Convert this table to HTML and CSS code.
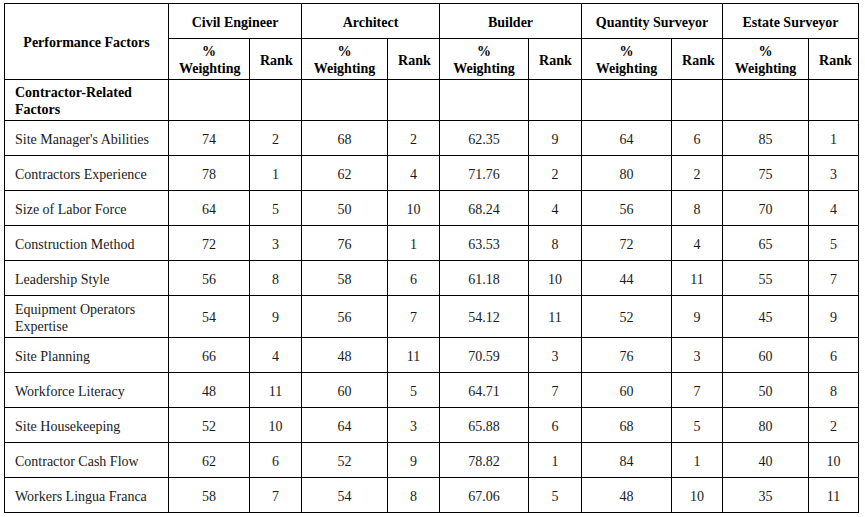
FILE: index.html
```html
<!DOCTYPE html>
<html>
<head>
<meta charset="utf-8">
<link rel="stylesheet" href="styles.css">
</head>
<body>
<table class="data">
  <colgroup>
    <col class="c-factor">
    <col class="c-w1"><col class="c-r1">
    <col class="c-w2"><col class="c-r2">
    <col class="c-w3"><col class="c-r3">
    <col class="c-w4"><col class="c-r4">
    <col class="c-w5"><col class="c-r5">
  </colgroup>
  <thead>
    <tr class="h1">
      <th rowspan="2">Performance Factors</th>
      <th colspan="2">Civil Engineer</th>
      <th colspan="2">Architect</th>
      <th colspan="2">Builder</th>
      <th colspan="2">Quantity Surveyor</th>
      <th colspan="2">Estate Surveyor</th>
    </tr>
    <tr class="h2">
      <th>%<br>Weighting</th><th>Rank</th>
      <th>%<br>Weighting</th><th>Rank</th>
      <th>%<br>Weighting</th><th>Rank</th>
      <th>%<br>Weighting</th><th>Rank</th>
      <th>%<br>Weighting</th><th>Rank</th>
    </tr>
  </thead>
  <tbody>
    <tr class="section">
      <th class="left">Contractor-Related<br>Factors</th>
      <td></td><td></td><td></td><td></td><td></td><td></td><td></td><td></td><td></td><td></td>
    </tr>
    <tr><td class="left">Site Manager's Abilities</td><td>74</td><td>2</td><td>68</td><td>2</td><td>62.35</td><td>9</td><td>64</td><td>6</td><td>85</td><td>1</td></tr>
    <tr><td class="left">Contractors Experience</td><td>78</td><td>1</td><td>62</td><td>4</td><td>71.76</td><td>2</td><td>80</td><td>2</td><td>75</td><td>3</td></tr>
    <tr><td class="left">Size of Labor Force</td><td>64</td><td>5</td><td>50</td><td>10</td><td>68.24</td><td>4</td><td>56</td><td>8</td><td>70</td><td>4</td></tr>
    <tr><td class="left">Construction Method</td><td>72</td><td>3</td><td>76</td><td>1</td><td>63.53</td><td>8</td><td>72</td><td>4</td><td>65</td><td>5</td></tr>
    <tr><td class="left">Leadership Style</td><td>56</td><td>8</td><td>58</td><td>6</td><td>61.18</td><td>10</td><td>44</td><td>11</td><td>55</td><td>7</td></tr>
    <tr class="tall"><td class="left">Equipment Operators<br>Expertise</td><td>54</td><td>9</td><td>56</td><td>7</td><td>54.12</td><td>11</td><td>52</td><td>9</td><td>45</td><td>9</td></tr>
    <tr><td class="left">Site Planning</td><td>66</td><td>4</td><td>48</td><td>11</td><td>70.59</td><td>3</td><td>76</td><td>3</td><td>60</td><td>6</td></tr>
    <tr><td class="left">Workforce Literacy</td><td>48</td><td>11</td><td>60</td><td>5</td><td>64.71</td><td>7</td><td>60</td><td>7</td><td>50</td><td>8</td></tr>
    <tr><td class="left">Site Housekeeping</td><td>52</td><td>10</td><td>64</td><td>3</td><td>65.88</td><td>6</td><td>68</td><td>5</td><td>80</td><td>2</td></tr>
    <tr><td class="left">Contractor Cash Flow</td><td>62</td><td>6</td><td>52</td><td>9</td><td>78.82</td><td>1</td><td>84</td><td>1</td><td>40</td><td>10</td></tr>
    <tr><td class="left">Workers Lingua Franca</td><td>58</td><td>7</td><td>54</td><td>8</td><td>67.06</td><td>5</td><td>48</td><td>10</td><td>35</td><td>11</td></tr>
  </tbody>
</table>
</body>
</html>
```

FILE: styles.css
```css
html, body {
  margin: 0;
  background: #fff;
}
body {
  padding: 3px 4px;
  font-family: "Times New Roman", "Liberation Serif", "DejaVu Serif", serif;
  font-size: 14px;
  color: #000;
}
.data {
  border-collapse: collapse;
  table-layout: fixed;
  width: 855px;
  font-family: "Times New Roman", "Liberation Serif", "DejaVu Serif", serif;
  font-size: 14px;
}
.c-factor { width: 164px; }
.c-w1 { width: 81px; }  .c-r1 { width: 52px; }
.c-w2 { width: 86px; }  .c-r2 { width: 52px; }
.c-w3 { width: 89px; }  .c-r3 { width: 53px; }
.c-w4 { width: 90px; }  .c-r4 { width: 51px; }
.c-w5 { width: 86px; }  .c-r5 { width: 50px; }

.data th, .data td {
  border: 1px solid #000;
  padding: 4px 10px 2px;
  line-height: 17px;
  text-align: center;
  vertical-align: middle;
}
.data th { font-weight: bold; }
.data td { color: #1a1a1a; }
.data tr { height: 35px; }
.data tr.h2, .data tr.section { height: 41px; }
.data tr.tall { height: 42px; }
.data .left { text-align: left; }
```
